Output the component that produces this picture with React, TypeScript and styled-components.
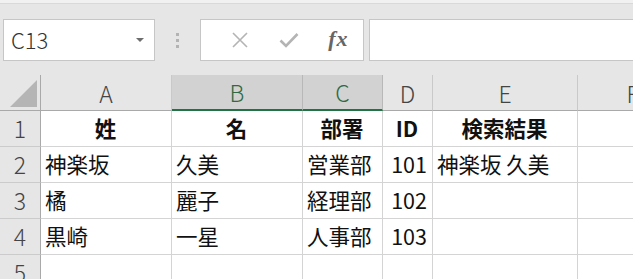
import React from 'react';
import styled, { createGlobalStyle, css } from 'styled-components';

const GlobalStyle = createGlobalStyle`
  html, body {
    margin: 0;
    padding: 0;
    background: #e6e6e6;
    overflow: hidden;
  }
  body {
    font-family: "Noto Sans CJK JP", "Noto Sans", sans-serif;
  }
`;

const Window = styled.div`
  width: 633px;
  height: 279px;
  overflow: hidden;
  background: #e6e6e6;
`;

const TopStrip = styled.div`
  height: 3px;
  background: #f1f1f1;
  border-bottom: 1px solid #d9d9d9;
`;

const FormulaBar = styled.div`
  display: flex;
  align-items: center;
  height: 42px;
  margin-top: 15px;
  padding-left: 3px;
`;

const NameBox = styled.div`
  box-sizing: border-box;
  width: 152px;
  height: 42px;
  background: #fff;
  border: 1px solid #c6c6c6;
  display: flex;
  align-items: center;
  justify-content: space-between;
  padding: 0 10px 2px 7px;
  font-family: "Noto Sans CJK JP", sans-serif;
  font-size: 22px;
  font-weight: 300;
  color: #333;
`;

const DropArrow = styled.span`
  width: 0;
  height: 0;
  border-left: 4px solid transparent;
  border-right: 4px solid transparent;
  border-top: 4px solid #6d6d6d;
  margin-top: 2px;
`;

const Grip = styled.div`
  width: 45px;
  display: flex;
  flex-direction: column;
  align-items: center;
  gap: 3px;
`;

const GripDot = styled.span`
  width: 3px;
  height: 3px;
  background: #b3b3b3;
`;

const ButtonBox = styled.div`
  box-sizing: border-box;
  width: 164px;
  height: 42px;
  background: #fff;
  border: 1px solid #c6c6c6;
  display: flex;
  align-items: center;
  padding-left: 14px;
`;

const IconButton = styled.span`
  width: 54px;
  display: flex;
  align-items: center;
  justify-content: center;
`;

const Fx = styled.span`
  font-family: "Liberation Serif", "DejaVu Serif", serif;
  font-style: italic;
  font-weight: bold;
  font-size: 22px;
  letter-spacing: 1px;
  color: #666;
  margin-top: -2px;
`;

const FormulaInput = styled.div`
  box-sizing: border-box;
  flex: 1;
  height: 42px;
  margin-left: 5px;
  background: #fff;
  border: 1px solid #c6c6c6;
  border-right: none;
`;

const Sheet = styled.div`
  margin-top: 14px;
  display: grid;
  grid-template-columns: 41px 131px 131px 80px 50px 145px 110px;
  grid-auto-rows: 36px;
`;

const Corner = styled.div`
  box-sizing: border-box;
  background: #e6e6e6;
  border-right: 1px solid #a9a9a9;
  border-bottom: 1px solid #a9a9a9;
  position: relative;
`;

const CornerTriangle = styled.span`
  position: absolute;
  right: 3px;
  bottom: 3px;
  width: 0;
  height: 0;
  border-left: 27px solid transparent;
  border-bottom: 27px solid #b5b5b5;
`;

const ColHead = styled.div<{ $active?: boolean }>`
  box-sizing: border-box;
  display: flex;
  align-items: center;
  justify-content: center;
  background: #e6e6e6;
  border-right: 1px solid #c9c9c9;
  border-bottom: 1px solid #a9a9a9;
  font-size: 23px;
  font-weight: 300;
  color: #444;
  ${p => p.$active && css`
    background: #d2d2d2;
    color: #2f6a43;
    border-right-color: #b8b8b8;
    border-bottom: 2px solid #217346;
  `}
`;

const RowHead = styled.div`
  box-sizing: border-box;
  display: flex;
  align-items: center;
  justify-content: center;
  background: #e6e6e6;
  border-right: 1px solid #a9a9a9;
  border-bottom: 1px solid #cbcbcb;
  font-size: 23px;
  font-weight: 300;
  color: #444;
  padding-bottom: 2px;
`;

const Cell = styled.div<{ $align?: 'left' | 'center' | 'right'; $bold?: boolean }>`
  box-sizing: border-box;
  display: flex;
  align-items: center;
  justify-content: ${p => (p.$align === 'center' ? 'center' : p.$align === 'right' ? 'flex-end' : 'flex-start')};
  background: #fff;
  border-right: 1px solid #d4d4d4;
  border-bottom: 1px solid #d4d4d4;
  padding: 0 5px 3px 4px;
  font-size: 21.5px;
  font-weight: ${p => (p.$bold ? 700 : 400)};
  color: #111;
  white-space: nowrap;
  overflow: hidden;
`;

type CellData = { text: string; align?: 'left' | 'center' | 'right'; bold?: boolean };

const columns = [
  { label: 'A' },
  { label: 'B', active: true },
  { label: 'C', active: true },
  { label: 'D' },
  { label: 'E' },
  { label: 'F' },
];

const rows: CellData[][] = [
  [
    { text: '姓', align: 'center', bold: true },
    { text: '名', align: 'center', bold: true },
    { text: '部署', align: 'center', bold: true },
    { text: 'ID', align: 'center', bold: true },
    { text: '検索結果', align: 'center', bold: true },
    { text: '' },
  ],
  [
    { text: '神楽坂' },
    { text: '久美' },
    { text: '営業部' },
    { text: '101', align: 'right' },
    { text: '神楽坂 久美' },
    { text: '' },
  ],
  [
    { text: '橘' },
    { text: '麗子' },
    { text: '経理部' },
    { text: '102', align: 'right' },
    { text: '' },
    { text: '' },
  ],
  [
    { text: '黒崎' },
    { text: '一星' },
    { text: '人事部' },
    { text: '103', align: 'right' },
    { text: '' },
    { text: '' },
  ],
  [
    { text: '' },
    { text: '' },
    { text: '' },
    { text: '' },
    { text: '' },
    { text: '' },
  ],
];

const CancelIcon = () => (
  <svg width="18" height="18" viewBox="0 0 18 18">
    <path d="M2 2 L16 16 M16 2 L2 16" stroke="#b4b4b4" strokeWidth="1.6" fill="none" />
  </svg>
);

const CheckIcon = () => (
  <svg width="20" height="18" viewBox="0 0 20 18">
    <path d="M1.5 9.5 L7 15 L18.5 3" stroke="#b4b4b4" strokeWidth="2.6" fill="none" />
  </svg>
);

const App: React.FC = () => {
  return (
    <Window>
      <GlobalStyle />
      <TopStrip />
      <FormulaBar>
        <NameBox>
          <span>C13</span>
          <DropArrow />
        </NameBox>
        <Grip>
          <GripDot />
          <GripDot />
          <GripDot />
        </Grip>
        <ButtonBox>
          <IconButton><CancelIcon /></IconButton>
          <IconButton><CheckIcon /></IconButton>
          <IconButton><Fx>fx</Fx></IconButton>
        </ButtonBox>
        <FormulaInput />
      </FormulaBar>

      <Sheet>
        <Corner>
          <CornerTriangle />
        </Corner>
        {columns.map(col => (
          <ColHead key={col.label} $active={col.active}>{col.label}</ColHead>
        ))}
        {rows.map((row, r) => (
          <React.Fragment key={r}>
            <RowHead>{r + 1}</RowHead>
            {row.map((cell, c) => (
              <Cell key={c} $align={cell.align} $bold={cell.bold}>
                {cell.text}
              </Cell>
            ))}
          </React.Fragment>
        ))}
      </Sheet>
    </Window>
  );
};

export default App;
